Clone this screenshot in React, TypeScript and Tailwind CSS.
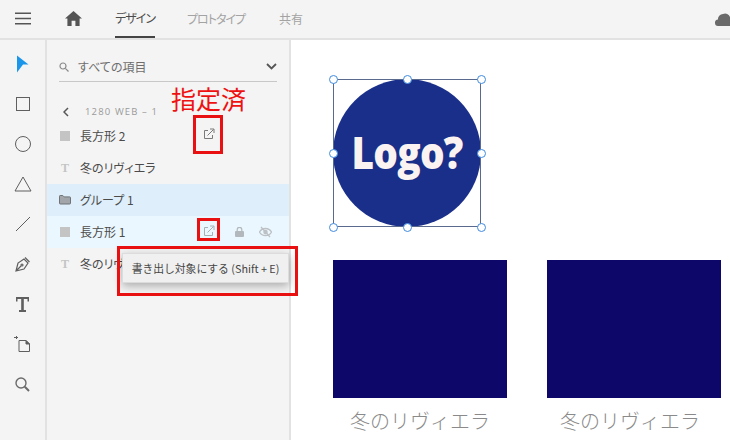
import React from 'react';

const FONT = "font-['Noto_Sans_CJK_JP','Noto_Sans',sans-serif]";
const PALT = "[font-feature-settings:'palt']";

const ExportIcon = ({ color = '#7a7a7a' }: { color?: string }) => (
    <svg width="12" height="12" viewBox="0 0 12 12" fill="none" stroke={color} strokeWidth="1">
        <path d="M5 2.5H1.5V10.5H9.5V7" />
        <path d="M4.5 7.5L10.5 1.5M7 1H11V5" />
    </svg>
);

const ShapeSquare = () => <div className="w-[10px] h-[10px] shrink-0 bg-[#c4c4c4]" />;

const TextGlyph = () => (
    <span className="w-[10px] text-center text-[12px] leading-none font-bold text-[#c4c4c4] font-['Liberation_Serif',serif]">T</span>
);

const FolderGlyph = () => (
    <svg className="shrink-0 -ml-[1px]" width="12" height="10" viewBox="0 0 12 10" fill="#a2a6aa" stroke="#6f7376">
        <path d="M.5 1.2a.7.7 0 0 1 .7-.7h2.6l1.4 1.4h5.6a.7.7 0 0 1 .7.7v5.7a.7.7 0 0 1-.7.7H1.2a.7.7 0 0 1-.7-.7z" />
    </svg>
);

const LayerRow = ({ icon, label, className = '', labelClass = '', children }: { icon: React.ReactNode; label: string; className?: string; labelClass?: string; children?: React.ReactNode }) => (
    <div className={`relative h-[32px] flex items-center pl-[13px] ${className}`}>
        <div className="w-[10px] flex justify-center">{icon}</div>
        <span className={`ml-[10px] text-[12px] text-[#4b4b4b] ${labelClass}`}>{label}</span>
        {children}
    </div>
);

const tools: React.ReactNode[] = [
    <svg key="select" width="13" height="18" viewBox="0 0 13 18" fill="#1b95ea"><path d="M1 0.5L12.5 9.5H7L1 17.5Z" /></svg>,
    <div key="rect" className="w-[14px] h-[14px] border border-[#5f5f5f]" />,
    <div key="ellipse" className="w-[16px] h-[16px] rounded-full border border-[#5f5f5f]" />,
    <svg key="triangle" width="18" height="16" viewBox="0 0 18 16" fill="none" stroke="#5f5f5f"><path d="M9 1L17 15H1Z" /></svg>,
    <svg key="line" width="16" height="16" viewBox="0 0 16 16" stroke="#5f5f5f"><path d="M1 15L15 1" /></svg>,
    <svg key="pen" width="16" height="16" viewBox="0 0 16 16" fill="none" stroke="#5f5f5f" strokeWidth="1.2"><path d="M1 15L3 7L9 3L13 7L9 13ZM1 15L6 10M10 1.5L14.5 6" /><circle cx="7" cy="9" r="1" /></svg>,
    <svg key="text" width="13" height="15" viewBox="0 0 13 15" fill="#5f5f5f"><path d="M0 0H13V4.5H11.5V2H7.8V13H10V15H3V13H5.2V2H1.5V4.5H0Z" /></svg>,
    <svg key="artboard" width="17" height="17" viewBox="0 0 17 17" fill="none" stroke="#5f5f5f"><path d="M5 4.5H12L15.5 8V15.5H5Z" /><path d="M12 4.5L15.5 8H12Z" fill="#5f5f5f" /><path d="M0 1.5H4M2.5 0V3" /></svg>,
    <svg key="zoom" width="15" height="15" viewBox="0 0 15 15" fill="none" stroke="#6a6a6a" strokeWidth="1.4"><circle cx="6" cy="6" r="5" /><path d="M9.8 9.8L14 14" strokeWidth="2" /></svg>,
];

const Handle = ({ className }: { className: string }) => (
    <div className={`absolute w-[9px] h-[9px] rounded-full bg-white border border-[#3f8ae0] ${className}`} />
);

const Card = ({ className, textClass = '' }: { className: string; textClass?: string }) => (
    <div className={`absolute top-[220px] w-[174px] ${className}`}>
        <div className="h-[138px] bg-[#0d0769]" />
        <div className={`mt-[9px] text-center text-[20px] leading-[28px] font-light text-[#8a8a8a] ${textClass}`}>冬のリヴィエラ</div>
    </div>
);

export default function App() {
    return (
        <div className={`relative w-[730px] h-[440px] overflow-hidden flex flex-col bg-white ${FONT}`}>
            {/* Top bar */}
            <header className="h-[40px] shrink-0 flex bg-[#f4f4f4] border-b-2 border-[#e2e2e2]">
                <div className="w-[46px] flex justify-center items-center pr-[1px] pb-[1px]">
                    <svg width="16" height="13" viewBox="0 0 16 13" stroke="#555" strokeWidth="1.6"><path d="M0 1.2H16M0 6.5H16M0 11.8H16" /></svg>
                </div>
                <div className="w-[54px] flex justify-center items-center pb-[1px]">
                    <svg width="17" height="15" viewBox="0 0 17 15" fill="#555"><path d="M8.5 0L17 7.6H14.6V15H10.4V9.8H6.6V15H2.4V7.6H0Z" /></svg>
                </div>
                <div className={`w-[40px] ml-[15px] h-[38px] flex justify-center items-center text-[12px] tracking-[-1px] text-[#4b4b4b] border-b-2 border-[#444] whitespace-nowrap ${PALT}`}>デザイン</div>
                <div className={`ml-[32px] h-[38px] flex items-center text-[12px] tracking-[-1px] text-[#a3a3a3] ${PALT}`}>プロトタイプ</div>
                <div className="ml-[34px] h-[38px] flex items-center text-[12px] text-[#a3a3a3]">共有</div>
                <div className="ml-auto h-[38px] flex items-center">
                    <svg width="15" height="13" viewBox="0 0 15 13" fill="#6a6a6a"><path d="M0 10a3 3 0 0 1 3-3.5A5 5 0 0 1 8 1a5 5 0 0 1 7 3V13H3a3 3 0 0 1-3-3Z" /></svg>
                </div>
            </header>

            <div className="flex-1 flex min-h-0">
                {/* Tool column */}
                <aside className="w-[47px] shrink-0 bg-[#f4f4f4] border-r-2 border-[#e2e2e2] flex flex-col items-center pt-[4px]">
                    {tools.map((tool, i) => (
                        <div key={i} className="h-[40px] w-full flex items-center justify-center">{tool}</div>
                    ))}
                </aside>

                {/* Layers panel */}
                <aside className="w-[244px] shrink-0 bg-[#f4f4f4] border-r-2 border-[#e2e2e2] flex flex-col">
                    <div className="mx-[12px] mt-[12px] h-[30px] border-b border-[#c8c8c8] flex items-center">
                        <svg width="10" height="10" viewBox="0 0 10 10" fill="none" stroke="#8a8a8a" strokeWidth="1.2"><circle cx="4" cy="4" r="3" /><path d="M6.3 6.3L9.5 9.5" /></svg>
                        <span className={`ml-[9px] text-[12px] text-[#6e6e6e] ${PALT}`}>すべての項目</span>
                        <svg className="ml-auto" width="11" height="7" viewBox="0 0 11 7" fill="none" stroke="#555" strokeWidth="1.8"><path d="M1 1L5.5 5.5L10 1" /></svg>
                    </div>
                    <div className="h-[38px] pl-[16px] pt-[22px] flex items-center">
                        <svg width="6" height="10" viewBox="0 0 6 10" fill="none" stroke="#555" strokeWidth="1.5"><path d="M5 1L1 5L5 9" /></svg>
                        <span className="ml-[16px] text-[9.5px] tracking-[0.12em] text-[#9a9a9a] font-['Open_Sans',sans-serif]">1280 WEB – 1</span>
                    </div>
                    <LayerRow icon={<ShapeSquare />} label="長方形 2">
                        <div className="absolute left-[156px] top-[8px]"><ExportIcon /></div>
                    </LayerRow>
                    <LayerRow icon={<TextGlyph />} label="冬のリヴィエラ" labelClass={PALT} />
                    <LayerRow icon={<FolderGlyph />} label="グループ 1" labelClass={PALT} className="bg-[#deeefa]" />
                    <LayerRow icon={<ShapeSquare />} label="長方形 1" className="bg-[#ebf7fe]">
                        <div className="absolute left-[156px] top-[9px]"><ExportIcon color="#a9b0b5" /></div>
                        <svg className="absolute left-[188px] top-[11px]" width="9" height="10" viewBox="0 0 9 10" fill="#b3b8bc">
                            <path d="M1 4h7a1 1 0 0 1 1 1v4a1 1 0 0 1-1 1H1a1 1 0 0 1-1-1V5a1 1 0 0 1 1-1Z" />
                            <path d="M2.2 4V2.6a2.3 2.3 0 0 1 4.6 0V4" fill="none" stroke="#b3b8bc" strokeWidth="1.2" />
                        </svg>
                        <svg className="absolute left-[212px] top-[10px]" width="13" height="12" viewBox="0 0 13 12" fill="none" stroke="#bcc1c5" strokeWidth="1.3">
                            <path d="M0.5 6C2 3.5 4 2.5 6.5 2.5S11 3.5 12.5 6C11 8.5 9 9.5 6.5 9.5S2 8.5 0.5 6Z" />
                            <circle cx="6.5" cy="6" r="1.6" fill="#bcc1c5" />
                            <path d="M2 1L11 11" />
                        </svg>
                    </LayerRow>
                    <LayerRow icon={<TextGlyph />} label="冬のリヴィエラ" labelClass={PALT} />
                </aside>

                {/* Canvas */}
                <main className="relative flex-1 bg-white">
                    <div className="absolute left-[42px] top-[39px] w-[148px] h-[148px] rounded-full bg-[#1a2f8a] flex items-center justify-center">
                        <span className="text-[44px] leading-none font-extrabold text-[#fbf3f1] font-['Open_Sans',sans-serif] tracking-[-0.02em] scale-x-[0.88] -translate-y-[1px]">Logo?</span>
                    </div>
                    <div className="absolute left-[42px] top-[39px] w-[148px] h-[148px] border border-[#5a6a8f]" />
                    <Handle className="left-[38px] top-[35px]" />
                    <Handle className="left-[112px] top-[35px]" />
                    <Handle className="left-[186px] top-[35px]" />
                    <Handle className="left-[38px] top-[109px]" />
                    <Handle className="left-[186px] top-[109px]" />
                    <Handle className="left-[38px] top-[183px]" />
                    <Handle className="left-[112px] top-[183px]" />
                    <Handle className="left-[186px] top-[183px]" />
                    <Card className="left-[42px]" />
                    <Card className="left-[256px]" textClass="-translate-x-[4px]" />
                </main>
            </div>

            {/* Tooltip */}
            <div className="absolute left-[122px] top-[253px] w-[167px] h-[30px] bg-[#f0f0f0] border border-[#dcdcdc] shadow-[0_3px_10px_rgba(0,0,0,0.3)] flex items-center justify-center text-[10.8px] text-[#444] whitespace-nowrap">
                書き出し対象にする (Shift + E)
            </div>

            {/* Red annotations */}
            <div className="absolute left-[171px] top-[82px] text-[25px] leading-[32px] text-[#ee1111] whitespace-nowrap">指定済</div>
            <div className="absolute left-[193px] top-[115px] w-[30px] h-[39px] border-[3px] border-[#e81010]" />
            <div className="absolute left-[197px] top-[218px] w-[23px] h-[23px] border-[3px] border-[#e81010]" />
            <div className="absolute left-[117px] top-[246px] w-[181px] h-[50px] border-[3px] border-[#e81010]" />
        </div>
    );
}
